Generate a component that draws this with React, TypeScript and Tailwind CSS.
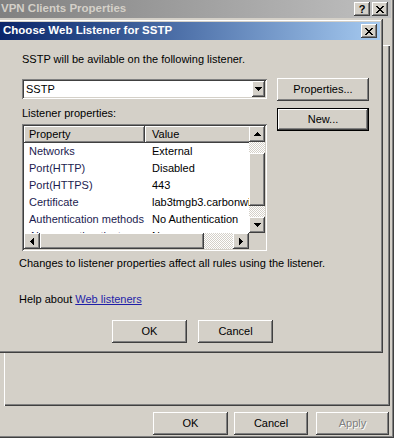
import React from "react";

const raised =
  "shadow-[inset_-1px_-1px_0_#404040,inset_1px_1px_0_#ffffff,inset_-2px_-2px_0_#808080,inset_2px_2px_0_#d4d0c8]";
const sunken =
  "shadow-[inset_1px_1px_0_#808080,inset_-1px_-1px_0_#ffffff,inset_2px_2px_0_#404040,inset_-2px_-2px_0_#d4d0c8]";
const checker =
  "bg-[image:repeating-conic-gradient(#d4d0c8_0_25%,#ffffff_0_50%)] bg-size-[2px_2px]";

function Arrow({ dir }: { dir: "up" | "down" | "left" | "right" }) {
  const paths = {
    up: "M3 0h1v1h1v1h1v1h1v1H0V3h1V2h1V1h1z",
    down: "M0 0h7v1H6v1H5v1H4v1H3V3H2V2H1V1H0z",
    left: "M3 0h1v7H3V6H2V5H1V4H0V3h1V2h1V1h1z",
    right: "M0 0h1v1h1v1h1v1h1v1H3v1H2v1H1v1H0z"
  };
  const vertical = dir === "up" || dir === "down";
  return (
    <svg
      width={vertical ? 7 : 4}
      height={vertical ? 4 : 7}
      viewBox={vertical ? "0 0 7 4" : "0 0 4 7"}
      shapeRendering="crispEdges"
    >
      <path d={paths[dir]} fill="#000" />
    </svg>
  );
}

function CloseGlyph() {
  return (
    <svg width="8" height="7" viewBox="0 0 8 7" shapeRendering="crispEdges">
      <path
        d="M0 0h2v1h1v1h2V1h1V0h2v1H7v1H6v1H5v1h1v1h1v1h1v1H6V6H5V5H3v1H2v1H0V6h1V5h1V4h1V3H2V2H1V1H0z"
        fill="#000"
      />
    </svg>
  );
}

function Button({
  children,
  className = "",
  isDefault = false,
  disabled = false
}: {
  children: React.ReactNode;
  className?: string;
  isDefault?: boolean;
  disabled?: boolean;
}) {
  return (
    <div
      className={`flex h-[23px] items-center justify-center bg-[#d4d0c8] text-[11px] ${
        isDefault ? "border border-black" : ""
      } ${className}`}
    >
      <div
        className={`flex h-full w-full items-center justify-center ${raised} ${
          disabled ? "text-[#808080] [text-shadow:1px_1px_0_#ffffff]" : "text-black"
        }`}
      >
        {children}
      </div>
    </div>
  );
}

const rows: [string, string][] = [
  ["Networks", "External"],
  ["Port(HTTP)", "Disabled"],
  ["Port(HTTPS)", "443"],
  ["Certificate", "lab3tmgb3.carbonwizard.local"],
  ["Authentication methods", "No Authentication"],
  ["Always authenticate", "No"]
];

function ListenerList() {
  return (
    <div className={`mt-[4px] flex h-[127px] w-[245px] flex-col bg-white p-[2px] ${sunken}`}>
      <div className="flex h-[107px]">
        <div className="w-[225px] overflow-hidden">
          <div className="flex h-[17px] w-[300px]">
            <div className={`flex w-[121px] shrink-0 items-center bg-[#d4d0c8] pl-[5px] ${raised}`}>
              Property
            </div>
            <div className={`flex flex-1 items-center bg-[#d4d0c8] pl-[7px] ${raised}`}>Value</div>
          </div>
          {rows.map(([name, value]) => (
            <div className="flex h-[17px] w-[300px] items-center whitespace-nowrap" key={name}>
              <span className="w-[123px] shrink-0 pl-[5px] text-[#1c1c50]">{name}</span>
              <span className="pl-[5px] text-black">{value}</span>
            </div>
          ))}
        </div>
        <div className="flex w-[16px] flex-col">
          <div className={`flex h-[16px] items-center justify-center bg-[#d4d0c8] ${raised}`}>
            <Arrow dir="up" />
          </div>
          <div className={`h-[11px] ${checker}`} />
          <div className={`h-[53px] bg-[#d4d0c8] ${raised}`} />
          <div className={`h-[11px] ${checker}`} />
          <div className={`flex h-[16px] items-center justify-center bg-[#d4d0c8] ${raised}`}>
            <Arrow dir="down" />
          </div>
        </div>
      </div>
      <div className="flex h-[16px]">
        <div className={`flex w-[16px] items-center justify-center bg-[#d4d0c8] ${raised}`}>
          <Arrow dir="left" />
        </div>
        <div className={`w-[164px] bg-[#d4d0c8] ${raised}`} />
        <div className={`w-[29px] ${checker}`} />
        <div className={`flex w-[16px] items-center justify-center bg-[#d4d0c8] ${raised}`}>
          <Arrow dir="right" />
        </div>
        <div className="w-[16px] bg-[#d4d0c8]" />
      </div>
    </div>
  );
}

function ListenerDialog() {
  return (
    <div
      className={`absolute left-[-4px] top-[19px] h-[334px] w-[387px] bg-[#d4d0c8] p-[3px] shadow-[inset_-1px_-1px_0_#404040,inset_1px_1px_0_#d4d0c8,inset_-2px_-2px_0_#808080,inset_2px_2px_0_#ffffff]`}
    >
      <div className="flex h-[18px] items-center justify-between bg-linear-to-r from-[#0a246a] to-[#a6caf0] pl-[4px] pr-[3px]">
        <span className="text-[11.5px] font-bold text-white">Choose Web Listener for SSTP</span>
        <div className={`flex h-[14px] w-[16px] items-center justify-center bg-[#d4d0c8] ${raised}`}>
          <CloseGlyph />
        </div>
      </div>

      <div className="pl-[20px]">
        <div className="flex items-start">
          <div className="ml-[3px] flex w-[245px] flex-col">
            <p className="mt-[13px] h-[13px] whitespace-nowrap leading-[13px]">
              SSTP will be avilable on the following listener.
            </p>
            <div className={`mt-[13px] flex h-[20px] items-center bg-white p-[2px] ${sunken}`}>
              <span className="flex-1 pl-[2px] leading-[13px]">SSTP</span>
              <div className={`flex h-[16px] w-[13px] items-center justify-center bg-[#d4d0c8] ${raised}`}>
                <Arrow dir="down" />
              </div>
            </div>
            <p className="mt-[8px] h-[13px] leading-[13px]">Listener properties:</p>
            <ListenerList />
          </div>
          <div className="ml-[10px] flex w-[92px] flex-col">
            <Button className="mt-[38px]">Properties...</Button>
            <Button className="mt-[7px]" isDefault>
              New...
            </Button>
          </div>
        </div>

        <p className="mt-[6px] h-[13px] whitespace-nowrap leading-[13px]">
          Changes to listener properties affect all rules using the listener.
        </p>
        <p className="mt-[23px] h-[13px] leading-[13px]">
          Help about <span className="text-[#1f1fa8] underline">Web listeners</span>
        </p>
        <div className="mt-[14px] flex">
          <Button className="ml-[93px] w-[75px]">OK</Button>
          <Button className="ml-[11px] w-[75px]">Cancel</Button>
        </div>
      </div>
    </div>
  );
}

export default function App() {
  return (
    <div className="relative h-[438px] w-[396px] overflow-hidden bg-white font-['Liberation_Sans',Arial,sans-serif] text-[11px] text-black">
      <div className="absolute left-[-6px] top-[-3px] flex h-[441px] w-[400px] flex-col bg-[#d4d0c8] p-[3px] shadow-[inset_-1px_-1px_0_#404040,inset_1px_1px_0_#d4d0c8,inset_-2px_-2px_0_#808080,inset_2px_2px_0_#ffffff]">
        <div className="flex h-[18px] shrink-0 items-center justify-between bg-linear-to-r from-[#808080] to-[#c0c0c0] pl-[4px] pr-[3px]">
          <span className="text-[11.5px] font-bold text-[#d4d0c8]">VPN Clients Properties</span>
          <div className="flex gap-[2px]">
            <div className={`flex h-[14px] w-[16px] items-center justify-center bg-[#d4d0c8] text-[11px] font-bold leading-none ${raised}`}>
              ?
            </div>
            <div className={`flex h-[14px] w-[16px] items-center justify-center bg-[#d4d0c8] ${raised}`}>
              <CloseGlyph />
            </div>
          </div>
        </div>
        <div
          className={`ml-[7px] mr-[1px] mt-[27px] h-[361px] shrink-0 bg-[#d4d0c8] shadow-[inset_1px_1px_0_#ffffff,inset_-1px_-1px_0_#404040,inset_-2px_-2px_0_#808080]`}
        />
        <div className="mr-[2px] mt-[6px] flex justify-end">
          <Button className="w-[75px]">OK</Button>
          <Button className="ml-[6px] w-[74px]">Cancel</Button>
          <Button className="ml-[8px] w-[73px]" disabled>
            Apply
          </Button>
        </div>
      </div>
      <ListenerDialog />
    </div>
  );
}
